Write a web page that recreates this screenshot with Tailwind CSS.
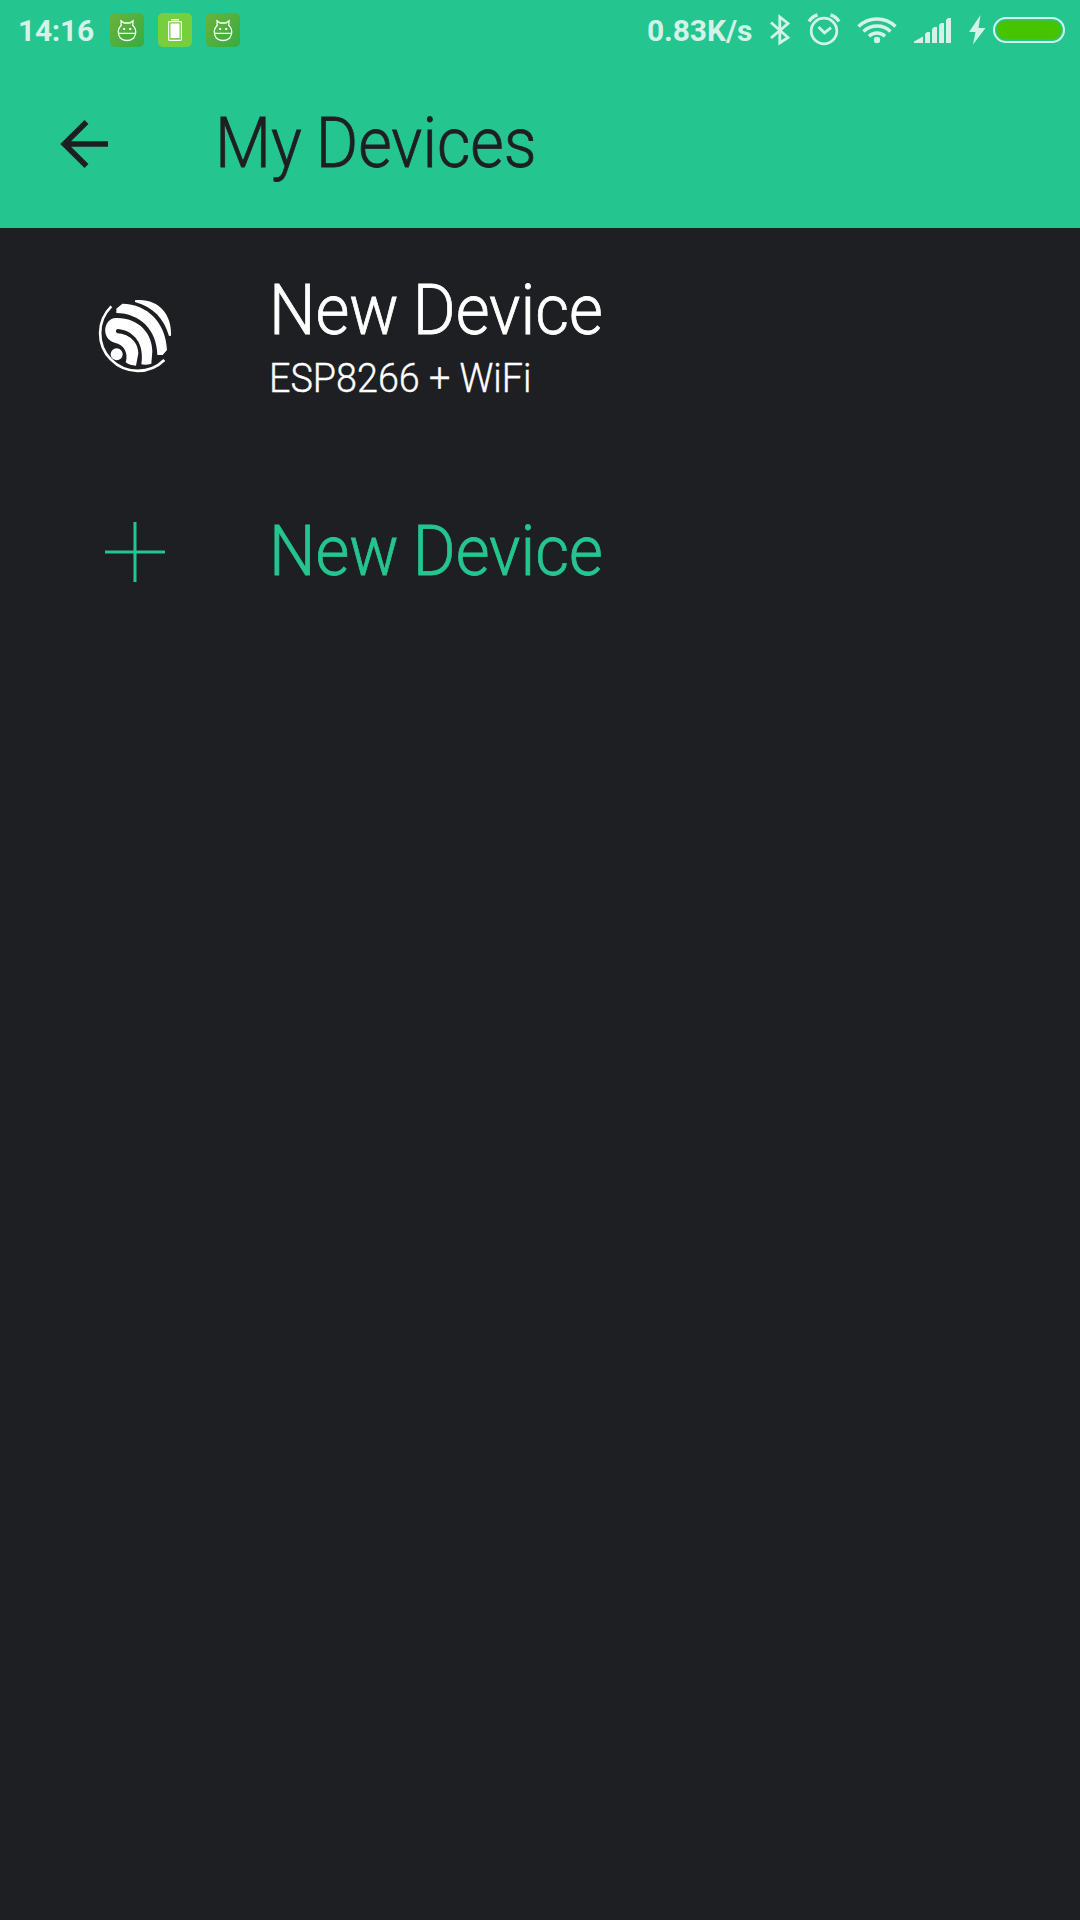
<!DOCTYPE html>
<html lang="en">
<head>
<meta charset="utf-8">
<title>My Devices</title>
<script src="https://cdn.jsdelivr.net/npm/@tailwindcss/browser@4"></script>
</head>
<body class="bg-[#1e1f23] font-['Roboto',sans-serif]">
<div class="flex h-[1920px] w-[1080px] flex-col overflow-hidden bg-[#1e1f23]">
  <header class="h-[228px] shrink-0 bg-[#25c58f] text-[#1e1f23]">
    <div class="flex h-[60px] items-center text-[#d3f3e9]">
      <div class="ml-[18px] w-[92px] pt-px text-[30px] leading-[60px] font-bold tracking-[-0.3px] whitespace-nowrap">14:16</div>
      <div class="flex gap-[14px]">
        <svg class="size-[34px]" viewBox="0 0 34 34" fill="none"><defs><linearGradient id="g" x1="0" y1="0" x2="1" y2="1"><stop stop-color="#69b33a"/><stop offset="1" stop-color="#37ac41"/></linearGradient></defs><rect width="34" height="34" rx="5" fill="url(#g)"/><path d="M11.200 12.500 11 7.800 14.200 10H19.800L23 7.800 22.800 12.500C27.800 17 26.500 27.500 17 27.500S6.200 17 11.200 12.500ZM8.300 20.300H25.700" stroke="#fff" stroke-width="1.300"/><path d="M13.200 15h2v2h-2zM19.200 15h2v2h-2z" fill="#fff"/></svg>
        <svg class="size-[34px]" viewBox="0 0 34 34"><rect width="34" height="34" rx="5" fill="#78cf3e"/><path d="M13 6h8v1.500h-8z" fill="#fff"/><rect x="10.600" y="8.600" width="12.800" height="18.800" rx=".8" fill="none" stroke="#fff" stroke-width="1.200"/><path d="M12.500 10.500h9V25h-9z" fill="#fff"/></svg>
        <svg class="size-[34px]" viewBox="0 0 34 34" fill="none"><rect width="34" height="34" rx="5" fill="url(#g)"/><path d="M11.200 12.500 11 7.800 14.200 10H19.800L23 7.800 22.800 12.500C27.800 17 26.500 27.500 17 27.500S6.200 17 11.200 12.500ZM8.300 20.300H25.700" stroke="#fff" stroke-width="1.300"/><path d="M13.200 15h2v2h-2zM19.200 15h2v2h-2z" fill="#fff"/></svg>
      </div>
      <div class="ml-auto w-[123px] pt-px text-[30px] leading-[60px] font-bold tracking-[-0.1px] whitespace-nowrap">0.83K/s</div>
      <svg class="h-[60px] w-[310px]" viewBox="770 0 310 60" fill="none" stroke="#d3f3e9">
        <path d="M771 22.500 788 37.500 779.800 43V17L788 23.500 771 38" stroke-width="2.800"/>
        <circle cx="824" cy="31" r="12.800" stroke-width="2.700"/><path d="m818.500 27 6 5.800 6.500-5.200" stroke-width="2.800"/><path d="M809 21.500Q811.500 17 817.500 14.800M839 21.500Q836.500 17 830.500 14.800" stroke-width="3.400"/>
        <path d="M858.500 26.500A26.500 26.500 0 0 1 895.500 26.500M863.500 31.500A19.500 19.500 0 0 1 890.500 31.500M869 36.300A11.500 11.500 0 0 1 885 36.300" stroke-width="3.500"/><circle cx="877" cy="40" r="3.200" fill="#d3f3e9" stroke="none"/>
        <path d="M914 43v-1.500l9-5V43ZM925 43V34l2-2h3V43ZM932 43V29l2-2h3V43ZM939 43V25l2-2h3V43ZM946 43V20l2-2h3V43ZM980.500 15 969 32h6.500L973 44.500 985.500 28H978.500Z" fill="#d3f3e9" stroke="none"/>
        <rect x="994" y="18" width="70" height="24" rx="12" stroke-width="2"/><rect x="996.500" y="20.500" width="65" height="19" rx="9.500" fill="#47c400" stroke="none"/>
      </svg>
    </div>
    <div class="flex pt-[43px]">
      <svg class="mt-[17px] ml-[60px] h-12 w-12" viewBox="0 0 48 48" fill="none" stroke="#1e1f23" stroke-width="5.600"><path d="M48 24H6M26.500 2 4.300 24 26.500 46"/></svg>
      <h1 class="ml-[107px] origin-left scale-x-[0.925] text-[70px] leading-[80px] font-light whitespace-nowrap [word-spacing:-2px] [-webkit-text-stroke:0.8px]">My Devices</h1>
    </div>
  </header>
  <main>
    <div class="flex h-[241px] pt-[42px] text-white">
      <svg class="mt-5 ml-[90px] size-[90px] shrink-0" viewBox="0 0 270 270" fill="#fff">
        <path d="M64 49A101 101 0 0 0 223 210" fill="none" stroke="#fff" stroke-width="8"/>
        <path d="M135 31C200 23 247 70 243 137L237 138C222 86 190 51 135 36Z"/>
        <path d="M79 56 97 41C172 42 228 98 231 180L218 195H202C201 119 149 70 79 69Z"/>
        <path d="M77 84C145 82 187 130 187 184L184 221Q168 226 154 223C156 210 156 200 155 190C153 148 120 119 82 117Q73 123 82 130C118 132 145 157 145 190L138 227Q120 227 107 217C116 190 102 163 74 158C32 146 40 86 77 84Z"/>
        <circle cx="80" cy="193" r="18"/>
      </svg>
      <div class="ml-[89px] whitespace-nowrap">
        <div class="origin-left scale-x-[0.935] text-[70px] leading-[80px] font-light [word-spacing:-2px] [-webkit-text-stroke:0.8px]">New Device</div>
        <div class="mt-1 origin-left scale-x-[0.92] text-[41px] leading-[48px] font-light [-webkit-text-stroke:0.4px]">ESP8266 + WiFi</div>
      </div>
    </div>
    <div class="flex pt-[42px] text-[#25c58f]">
      <svg class="mt-[11px] ml-[105px] size-[60px]" viewBox="0 0 60 60" fill="none" stroke="#25c58f" stroke-width="3"><path d="M0 30H60M30 0V60"/></svg>
      <div class="ml-[104px] origin-left scale-x-[0.935] text-[70px] leading-[80px] font-light whitespace-nowrap [word-spacing:-2px] [-webkit-text-stroke:0.8px]">New Device</div>
    </div>
  </main>
</div>
</body>
</html>
